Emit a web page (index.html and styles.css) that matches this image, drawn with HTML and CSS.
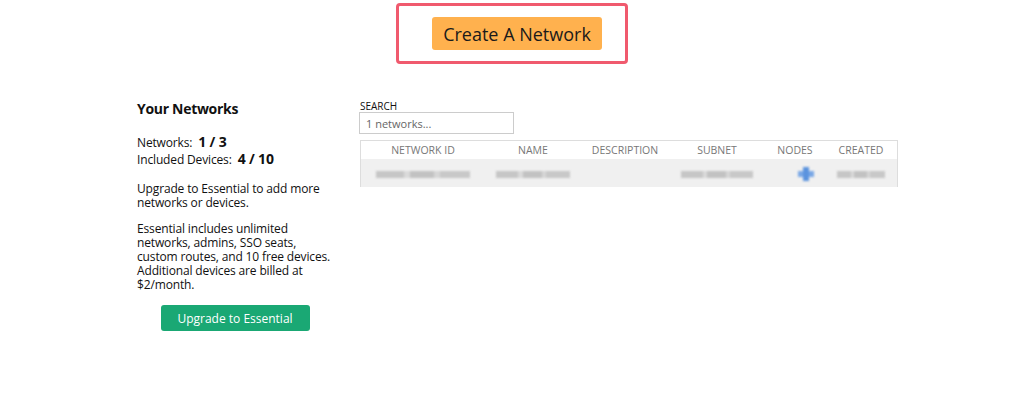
FILE: index.html
```html
<!DOCTYPE html>
<html lang="en">
<head>
    <meta charset="UTF-8">
    <meta name="viewport" content="width=device-width, initial-scale=1.0">
    <title>Networks</title>
    <link rel="stylesheet" href="styles.css">
</head>
<body>
    <div class="top">
        <div class="highlight">
            <button class="btn-create">Create A Network</button>
        </div>
    </div>

    <div class="main">
        <div class="sidebar">
            <h2>Your Networks</h2>
            <div class="stat">Networks: <b>1 / 3</b></div>
            <div class="stat">Included Devices: <b>4 / 10</b></div>
            <p>Upgrade to Essential to add more networks or devices.</p>
            <p>Essential includes unlimited networks, admins, SSO seats, custom routes, and 10 free devices. Additional devices are billed at $2/month.</p>
            <div class="upgrade-wrap">
                <button class="btn-upgrade">Upgrade to Essential</button>
            </div>
        </div>

        <div class="content">
            <label class="search-label">SEARCH</label>
            <input class="search" type="text" placeholder="1 networks...">
            <table class="networks">
                <thead>
                    <tr>
                        <th class="c-id">NETWORK ID</th>
                        <th class="c-name">NAME</th>
                        <th class="c-desc">DESCRIPTION</th>
                        <th class="c-subnet">SUBNET</th>
                        <th class="c-nodes">NODES</th>
                        <th class="c-created">CREATED</th>
                    </tr>
                </thead>
                <tbody>
                    <tr>
                        <td><span class="blur" style="width: 94px"></span></td>
                        <td><span class="blur" style="width: 74px"></span></td>
                        <td></td>
                        <td><span class="blur" style="width: 72px"></span></td>
                        <td class="nodes-cell"><span class="node-icon"></span></td>
                        <td><span class="blur" style="width: 48px"></span></td>
                    </tr>
                </tbody>
            </table>
        </div>
    </div>
</body>
</html>
```

FILE: styles.css
```css
body {
    margin: 0;
    font-family: "Open Sans", "Noto Sans", sans-serif;
    color: #111;
    background: #fff;
}

.top {
    display: flex;
    justify-content: center;
    padding-top: 3px;
}

.highlight {
    width: 226px;
    height: 55px;
    border: 3px solid #f05a6e;
    border-radius: 4px;
    display: flex;
    justify-content: center;
    align-items: center;
}

.btn-create {
    background: #ffb14e;
    border: none;
    border-radius: 3px;
    width: 170px;
    height: 33px;
    font-family: inherit;
    font-size: 18px;
    color: #1a1a1a;
    padding: 0;
    margin-left: 10px;
}

.main {
    display: flex;
    padding-left: 137px;
    margin-top: 30px;
}

/* 左侧 */
.sidebar {
    width: 200px;
    font-size: 12px;
    line-height: 14px;
    letter-spacing: -0.15px;
}

.sidebar h2 {
    font-size: 14px;
    font-weight: 700;
    letter-spacing: -0.3px;
    margin: 8px 0 18px 0;
}

.stat {
    line-height: 17px;
    height: 17px;
}

.stat b {
    font-size: 14px;
    line-height: 14px;
    margin-left: 3px;
}

.sidebar p {
    margin: 14px 0 0 0;
}

.sidebar p + p {
    margin-top: 12px;
}

.upgrade-wrap {
    display: flex;
    justify-content: center;
    margin-top: 13px;
    padding-right: 4px;
}

.btn-upgrade {
    background: #1aa874;
    color: #fff;
    border: none;
    border-radius: 3px;
    width: 149px;
    height: 26px;
    font-family: inherit;
    font-size: 12px;
    padding: 0;
}

/* 右侧 */
.content {
    margin-left: 23px;
    width: 538px;
    padding-top: 6px;
}

.search-label {
    display: block;
    font-size: 10px;
    line-height: 12px;
    color: #111;
}

.search {
    display: block;
    box-sizing: border-box;
    width: 155px;
    height: 22px;
    border: 1px solid #ccc;
    font-family: inherit;
    font-size: 11px;
    padding: 0 6px;
    margin: 0 0 6px -1px;
}

.search::placeholder {
    color: #666;
}

.networks {
    width: 538px;
    border-collapse: collapse;
    border: 1px solid #ddd;
    border-bottom: none;
    font-size: 10.5px;
}

.networks th {
    font-weight: 400;
    color: #777;
    height: 18px;
    padding: 0;
    text-align: center;
}

.networks td {
    background: #f0f0f0;
    height: 28px;
    padding: 0;
    text-align: center;
}

.c-id { width: 124px; }
.c-name { width: 96px; }
.c-desc { width: 88px; }
.c-subnet { width: 96px; }
.c-nodes { width: 60px; }

.networks td.nodes-cell {
    padding-left: 22px;
}

.blur {
    display: inline-block;
    height: 7px;
    background: linear-gradient(90deg, #c6c6c6 0 30%, #dadada 30% 36%, #c2c2c2 36% 62%, #d6d6d6 62% 68%, #c8c8c8 68%);
    filter: blur(1.2px);
    vertical-align: middle;
}

.node-icon {
    display: inline-block;
    width: 16px;
    height: 14px;
    vertical-align: middle;
    filter: blur(1px);
    background:
        linear-gradient(#5b93de, #5b93de) center / 6px 14px no-repeat,
        linear-gradient(#7aa8e6, #7aa8e6) center / 16px 6px no-repeat;
}
```
